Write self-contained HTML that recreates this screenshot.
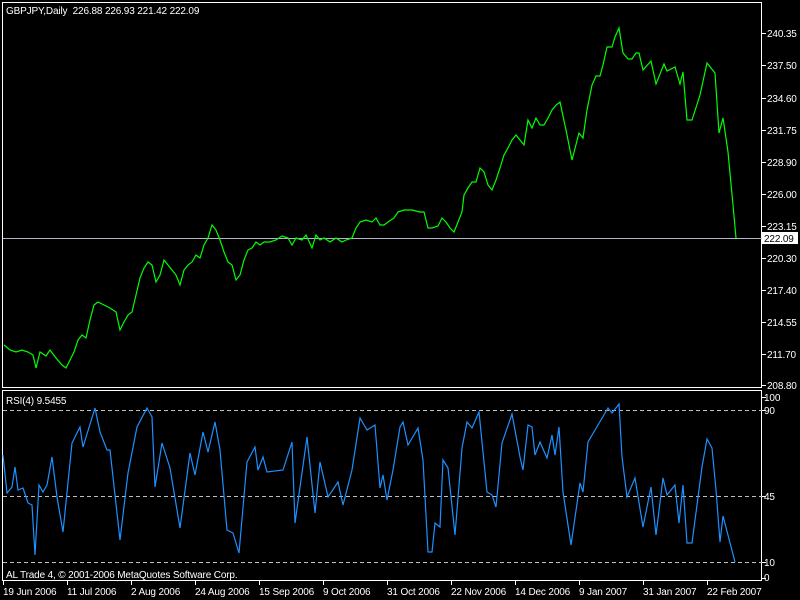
<!DOCTYPE html>
<html><head><meta charset="utf-8"><style>
html,body{margin:0;padding:0;background:#000;width:800px;height:600px;overflow:hidden}
svg{display:block}
text{font-family:"Liberation Sans",sans-serif;font-size:10px;letter-spacing:-0.15px;fill:#fff}
</style></head><body>
<svg width="800" height="600" viewBox="0 0 800 600" xmlns="http://www.w3.org/2000/svg">
<rect width="800" height="600" fill="#000"/>
<rect x="2.5" y="2.5" width="759" height="385" fill="none" stroke="#fff" stroke-width="1"/>
<rect x="2.5" y="390.5" width="759" height="190" fill="none" stroke="#fff" stroke-width="1"/>
<g stroke="#fff">
<line x1="762" y1="33.5" x2="766" y2="33.5"/><line x1="762" y1="65.5" x2="766" y2="65.5"/>
<line x1="762" y1="98.5" x2="766" y2="98.5"/><line x1="762" y1="130.5" x2="766" y2="130.5"/>
<line x1="762" y1="162.5" x2="766" y2="162.5"/><line x1="762" y1="194.5" x2="766" y2="194.5"/>
<line x1="762" y1="226.5" x2="766" y2="226.5"/><line x1="762" y1="258.5" x2="766" y2="258.5"/>
<line x1="762" y1="290.5" x2="766" y2="290.5"/><line x1="762" y1="322.5" x2="766" y2="322.5"/>
<line x1="762" y1="354.5" x2="766" y2="354.5"/><line x1="762" y1="385.5" x2="766" y2="385.5"/>
</g>
<g>
<text x="767" y="37">240.35</text><text x="767" y="69">237.50</text>
<text x="767" y="102">234.60</text><text x="767" y="134">231.75</text>
<text x="767" y="166">228.90</text><text x="767" y="198">226.00</text>
<text x="767" y="230">223.15</text><text x="767" y="262">220.30</text>
<text x="767" y="294">217.40</text><text x="767" y="326">214.55</text>
<text x="767" y="358">211.70</text><text x="767" y="389">208.80</text>
</g>
<line x1="3" y1="238.5" x2="762" y2="238.5" stroke="#b0b8c8"/>
<rect x="762" y="232" width="36" height="12" fill="#fff"/>
<text x="764" y="242" style="fill:#000">222.09</text>
<text x="6" y="14">GBPJPY,Daily&#160;&#160;226.88 226.93 221.42 222.09</text>
<polyline fill="none" stroke="#00ff00" stroke-width="1.2" points="4,345 10,350 16,352 22,350 28,352 33,355 36,368 40,352 46,356 50,350 56,358 62,365 66,368 70,360 74,352 78,340 82,335 86,338 90,320 94,305 98,302 104,305 110,308 116,312 120,330 124,322 128,315 132,312 136,295 140,278 144,268 148,262 152,265 156,282 160,275 164,260 168,265 172,270 176,275 180,285 184,270 188,265 192,262 196,255 200,258 204,245 208,238 212,225 216,230 220,240 224,252 228,262 232,265 236,280 240,275 244,260 248,250 252,248 256,242 260,245 264,242 270,242 276,240 282,236 288,238 292,245 296,238 302,240 306,235 312,248 316,235 320,240 324,238 330,242 336,238 342,242 346,240 352,238 356,228 360,222 366,220 372,222 376,218 380,225 384,225 388,222 394,218 398,212 404,210 412,210 420,212 424,212 428,228 432,228 438,226 442,218 446,222 450,228 454,232 458,222 462,212 464,195 468,188 472,182 476,182 480,168 484,172 488,185 492,190 496,180 500,168 504,155 508,148 512,140 516,135 520,140 524,145 528,120 532,128 536,118 540,125 544,125 548,118 552,110 556,105 560,102 566,130 572,160 579,133 583,138 587,110 592,85 596,76 600,76 603,65 607,47 612,47 615,37 619,28 623,53 628,59 632,59 636,53 639,53 643,70 651,61 656,84 664,64 667,71 675,67 680,84 683,72 687,120 692,120 700,95 707,63 715,73 719,133 723,118 728,152 733,205 736,238"/>
<g stroke="#c0c0c0" stroke-dasharray="4,3">
<line x1="3" y1="410.5" x2="762" y2="410.5"/>
<line x1="3" y1="496.5" x2="762" y2="496.5"/>
<line x1="3" y1="562.5" x2="762" y2="562.5"/>
</g>
<g stroke="#fff">
<line x1="762" y1="397.5" x2="766" y2="397.5"/><line x1="762" y1="410.5" x2="766" y2="410.5"/>
<line x1="762" y1="496.5" x2="766" y2="496.5"/><line x1="762" y1="562.5" x2="766" y2="562.5"/>
<line x1="762" y1="578.5" x2="766" y2="578.5"/>
</g>
<text x="764" y="401">100</text><text x="764" y="414">90</text>
<text x="764" y="500">45</text><text x="764" y="566">10</text><text x="764" y="581">0</text>
<text x="6" y="404">RSI(4) 9.5455</text>
<text x="6" y="578">AL Trade 4, © 2001-2006 MetaQuotes Software Corp.</text>
<polyline fill="none" stroke="#1e90ff" stroke-width="1.2" points="3,455 7,493 12,487 15,467 18,490 23,488 28,503 32,505 35,555 39,485 43,492 47,485 52,457 57,497 63,532 72,443 80,427 83,447 95,408 100,432 107,450 110,450 120,540 128,473 137,427 147,408 152,417 155,487 162,443 170,468 180,528 190,453 195,475 203,432 208,452 215,422 220,450 227,530 233,533 239,553 247,462 255,447 258,470 263,457 267,472 283,470 292,442 295,523 307,437 315,513 320,462 328,497 338,482 343,505 352,470 360,418 367,430 375,425 380,488 383,475 387,500 393,470 400,427 403,422 408,445 418,428 423,460 428,552 432,552 435,523 440,527 443,460 448,468 455,535 462,448 467,422 472,428 479,412 487,492 492,495 496,507 502,443 512,414 520,457 523,470 528,425 532,427 535,455 540,442 547,458 552,435 555,455 559,427 563,492 571,545 580,483 583,492 588,442 598,425 608,408 612,413 619,404 622,457 627,497 635,478 643,527 651,487 656,535 663,478 667,495 675,485 679,523 683,485 687,543 692,543 702,467 707,439 712,448 716,490 720,542 723,516 735,562"/>
<g stroke="#fff">
<line x1="3.5" y1="581" x2="3.5" y2="585"/><line x1="67.5" y1="581" x2="67.5" y2="585"/>
<line x1="131.5" y1="581" x2="131.5" y2="585"/><line x1="195.5" y1="581" x2="195.5" y2="585"/>
<line x1="259.5" y1="581" x2="259.5" y2="585"/><line x1="323.5" y1="581" x2="323.5" y2="585"/>
<line x1="387.5" y1="581" x2="387.5" y2="585"/><line x1="451.5" y1="581" x2="451.5" y2="585"/>
<line x1="515.5" y1="581" x2="515.5" y2="585"/><line x1="579.5" y1="581" x2="579.5" y2="585"/>
<line x1="643.5" y1="581" x2="643.5" y2="585"/><line x1="707.5" y1="581" x2="707.5" y2="585"/>
</g>
<g>
<text x="3" y="595">19 Jun 2006</text><text x="67" y="595">11 Jul 2006</text>
<text x="131" y="595">2 Aug 2006</text><text x="195" y="595">24 Aug 2006</text>
<text x="259" y="595">15 Sep 2006</text><text x="323" y="595">9 Oct 2006</text>
<text x="387" y="595">31 Oct 2006</text><text x="451" y="595">22 Nov 2006</text>
<text x="515" y="595">14 Dec 2006</text><text x="579" y="595">9 Jan 2007</text>
<text x="643" y="595">31 Jan 2007</text><text x="707" y="595">22 Feb 2007</text>
</g>
</svg>
</body></html>
